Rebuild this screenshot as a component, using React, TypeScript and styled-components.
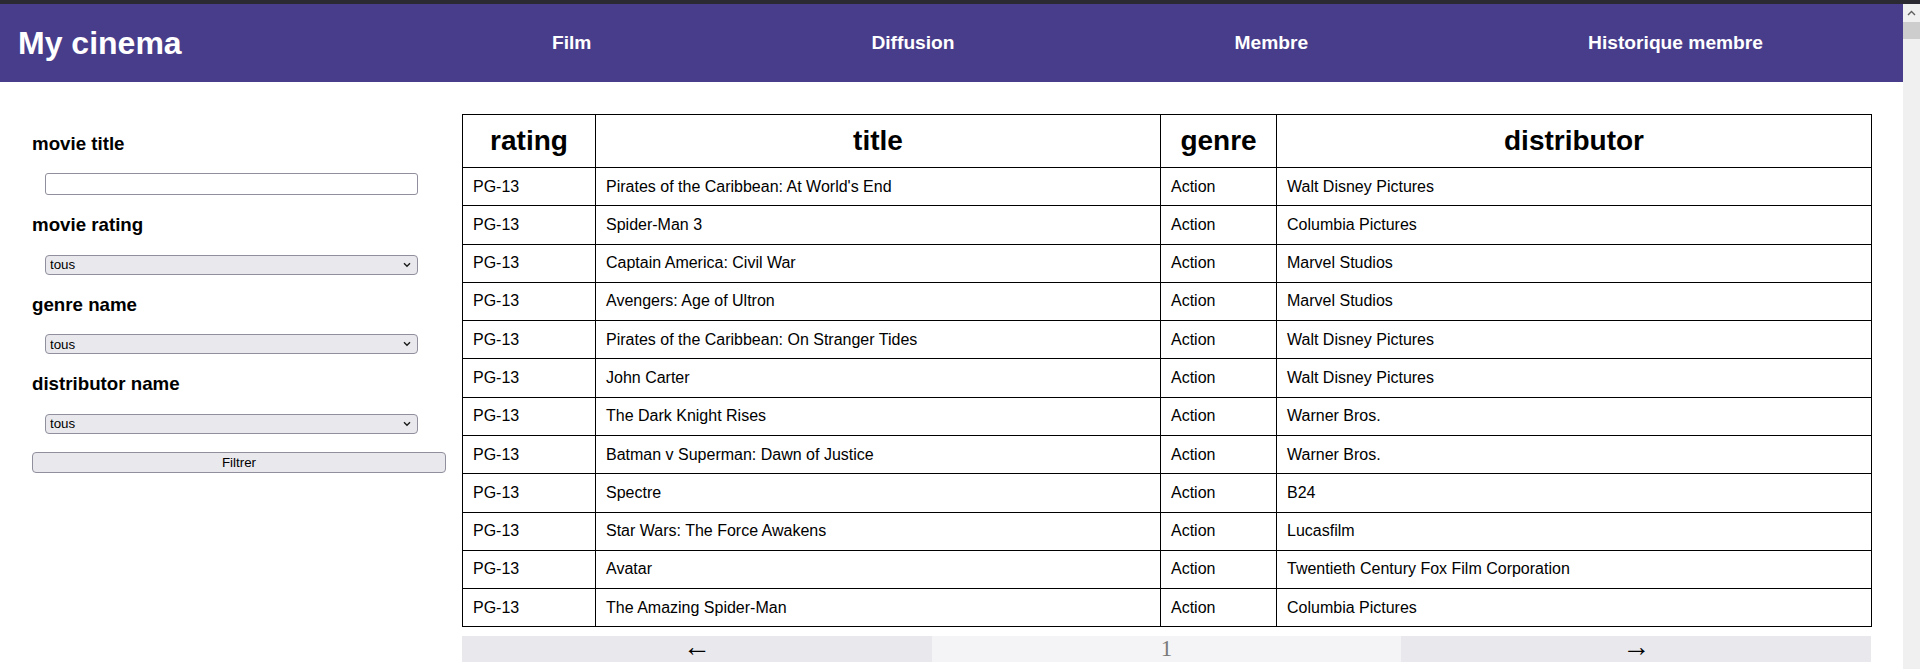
import React from "react";
import styled, { createGlobalStyle } from "styled-components";

const GlobalStyle = createGlobalStyle`
  html, body {
    margin: 0;
    padding: 0;
    overflow: hidden;
    background: #ffffff;
  }
  body {
    font-family: "Liberation Sans", Arial, sans-serif;
    color: #000000;
  }
  * {
    box-sizing: border-box;
  }
`;

const WindowBar = styled.div`
  height: 4px;
  background: #2b2a33;
`;

const Viewport = styled.div`
  display: flex;
  height: 665px;
`;

const Page = styled.div`
  flex: 1;
  min-width: 0;
`;

const Header = styled.header`
  display: flex;
  align-items: center;
  height: 78px;
  background: #483d8b;
  color: #ffffff;
`;

const Brand = styled.h1`
  margin: 0;
  width: 412px;
  padding-left: 18px;
  font-size: 32px;
  font-weight: bold;
`;

const Nav = styled.nav`
  flex: 1;
  display: flex;
  justify-content: space-around;
`;

const NavLink = styled.a`
  color: #ffffff;
  text-decoration: none;
  font-weight: bold;
  font-size: 19.2px;
`;

const Main = styled.main`
  display: flex;
  align-items: flex-start;
  gap: 16px;
  padding: 32px 32px 0;
`;

const Sidebar = styled.form`
  width: 414px;
  flex-shrink: 0;
`;

const FieldLabel = styled.h3`
  margin: 18.72px 0;
  font-size: 18.72px;
  font-weight: bold;
`;

const TextInput = styled.input`
  display: block;
  margin-left: 13px;
  width: 373px;
  height: 22px;
  border: 1px solid #8f8f9d;
  border-radius: 3px;
  background: #ffffff;
`;

const SelectWrap = styled.div`
  position: relative;
  margin-left: 13px;
  width: 373px;
  height: 20px;
`;

const Select = styled.select`
  appearance: none;
  width: 100%;
  height: 100%;
  border: 1px solid #8f8f9d;
  border-radius: 4px;
  background: #e9e9ed;
  color: #000000;
  font: 13.33px "Liberation Sans", Arial, sans-serif;
  padding: 0 20px 0 4px;
`;

const Chevron = styled.svg`
  position: absolute;
  right: 7px;
  top: 7px;
  pointer-events: none;
`;

const SubmitButton = styled.button`
  display: block;
  width: 414px;
  height: 21px;
  margin-top: 18px;
  padding: 0;
  border: 1px solid #8f8f9d;
  border-radius: 4px;
  background: #e9e9ed;
  color: #000000;
  font: 13.33px "Liberation Sans", Arial, sans-serif;
`;

const Results = styled.section`
  flex: 1;
  min-width: 0;
`;

const Table = styled.table`
  width: 100%;
  border-collapse: collapse;
  table-layout: fixed;
`;

const HeadCell = styled.th`
  border: 1px solid #000000;
  padding: 10px;
  font-size: 28px;
  font-weight: bold;
  text-align: center;
`;

const Cell = styled.td`
  border: 1px solid #000000;
  padding: 9.65px 10px;
  font-size: 16px;
  text-align: left;
  white-space: nowrap;
`;

const Pagination = styled.div`
  display: grid;
  grid-template-columns: repeat(3, 1fr);
  margin-top: 9px;
  height: 25px;
`;

const PageButton = styled.button`
  border: none;
  padding: 0 0 5px;
  background: #e9e9ed;
  color: #000000;
  font: 28px "Liberation Serif", "Times New Roman", serif;
  line-height: 20px;
`;

const PageNumber = styled.span`
  background: #f4f4f6;
  color: #7a7a7a;
  text-align: center;
  font: 23px "Liberation Serif", "Times New Roman", serif;
  line-height: 26px;
`;

const ScrollRail = styled.div`
  width: 17px;
  flex-shrink: 0;
  display: flex;
  flex-direction: column;
  background: #f0f0f0;
`;

const ScrollArrow = styled.div`
  height: 18px;
  display: flex;
  align-items: center;
  justify-content: center;
`;

const ScrollThumb = styled.div`
  height: 17px;
  background: #cdcdcd;
`;

interface Movie {
  rating: string;
  title: string;
  genre: string;
  distributor: string;
}

const movies: Movie[] = [
  { rating: "PG-13", title: "Pirates of the Caribbean: At World's End", genre: "Action", distributor: "Walt Disney Pictures" },
  { rating: "PG-13", title: "Spider-Man 3", genre: "Action", distributor: "Columbia Pictures" },
  { rating: "PG-13", title: "Captain America: Civil War", genre: "Action", distributor: "Marvel Studios" },
  { rating: "PG-13", title: "Avengers: Age of Ultron", genre: "Action", distributor: "Marvel Studios" },
  { rating: "PG-13", title: "Pirates of the Caribbean: On Stranger Tides", genre: "Action", distributor: "Walt Disney Pictures" },
  { rating: "PG-13", title: "John Carter", genre: "Action", distributor: "Walt Disney Pictures" },
  { rating: "PG-13", title: "The Dark Knight Rises", genre: "Action", distributor: "Warner Bros." },
  { rating: "PG-13", title: "Batman v Superman: Dawn of Justice", genre: "Action", distributor: "Warner Bros." },
  { rating: "PG-13", title: "Spectre", genre: "Action", distributor: "B24" },
  { rating: "PG-13", title: "Star Wars: The Force Awakens", genre: "Action", distributor: "Lucasfilm" },
  { rating: "PG-13", title: "Avatar", genre: "Action", distributor: "Twentieth Century Fox Film Corporation" },
  { rating: "PG-13", title: "The Amazing Spider-Man", genre: "Action", distributor: "Columbia Pictures" },
];

const columns = [
  { key: "rating", width: 133 },
  { key: "title", width: 565 },
  { key: "genre", width: 116 },
  { key: "distributor", width: 595 },
] as const;

const FilterSelect: React.FC = () => (
  <SelectWrap>
    <Select defaultValue="tous">
      <option value="tous">tous</option>
    </Select>
    <Chevron width="8" height="6" viewBox="0 0 8 6">
      <path d="M1 1.2 L4 4.2 L7 1.2" fill="none" stroke="#1b1b1b" strokeWidth="1.4" />
    </Chevron>
  </SelectWrap>
);

export default function App() {
  return (
    <>
      <GlobalStyle />
      <WindowBar />
      <Viewport>
        <Page>
          <Header>
            <Brand>My cinema</Brand>
            <Nav>
              <NavLink href="#">Film</NavLink>
              <NavLink href="#">Diffusion</NavLink>
              <NavLink href="#">Membre</NavLink>
              <NavLink href="#">Historique membre</NavLink>
            </Nav>
          </Header>
          <Main>
            <Sidebar onSubmit={(e) => e.preventDefault()}>
              <FieldLabel>movie title</FieldLabel>
              <TextInput type="text" />
              <FieldLabel>movie rating</FieldLabel>
              <FilterSelect />
              <FieldLabel>genre name</FieldLabel>
              <FilterSelect />
              <FieldLabel>distributor name</FieldLabel>
              <FilterSelect />
              <SubmitButton type="submit">Filtrer</SubmitButton>
            </Sidebar>
            <Results>
              <Table>
                <colgroup>
                  {columns.map((c) => (
                    <col key={c.key} style={{ width: c.width }} />
                  ))}
                </colgroup>
                <thead>
                  <tr>
                    {columns.map((c) => (
                      <HeadCell key={c.key}>{c.key}</HeadCell>
                    ))}
                  </tr>
                </thead>
                <tbody>
                  {movies.map((m) => (
                    <tr key={m.title}>
                      <Cell>{m.rating}</Cell>
                      <Cell>{m.title}</Cell>
                      <Cell>{m.genre}</Cell>
                      <Cell>{m.distributor}</Cell>
                    </tr>
                  ))}
                </tbody>
              </Table>
              <Pagination>
                <PageButton type="button">←</PageButton>
                <PageNumber>1</PageNumber>
                <PageButton type="button">→</PageButton>
              </Pagination>
            </Results>
          </Main>
        </Page>
        <ScrollRail>
          <ScrollArrow>
            <svg width="9" height="6" viewBox="0 0 9 6">
              <path d="M1 5 L4.5 1.5 L8 5" fill="none" stroke="#606060" strokeWidth="1.4" />
            </svg>
          </ScrollArrow>
          <ScrollThumb />
        </ScrollRail>
      </Viewport>
    </>
  );
}
